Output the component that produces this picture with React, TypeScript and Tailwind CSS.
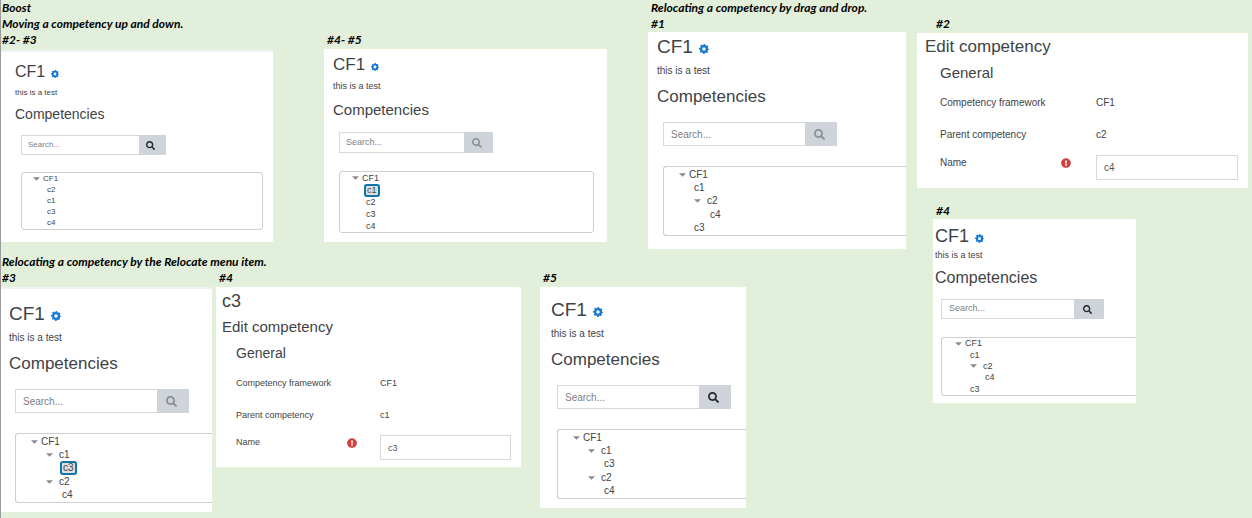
import clsx from "clsx";
import type { ReactNode } from "react";
import { FaExclamationCircle, FaSearch } from "react-icons/fa";

type Size = "sm" | "md" | "wide" | "lg";

interface TreeItem {
  name: string;
  depth: number;
  open?: boolean;
  selected?: boolean;
}

interface FrameworkPanelProps {
  id: string;
  size: Size;
  items: TreeItem[];
  className?: string;
  treeClassName?: string;
  searchDisabled?: boolean;
}

interface EditPanelProps {
  id: string;
  title?: string;
  parent: string;
  name: string;
  compact?: boolean;
  className?: string;
}

// Every panel shows the same page at a slightly different scale
const sizes = {
  sm: {
    title: "text-[16px] leading-5",
    cog: "size-2",
    note: "mt-1.5 text-[8px] leading-[10px]",
    heading: "mt-1.5 text-[14px] leading-5",
    search: "mt-[11px] h-5 w-[145px] text-[8px]",
    input: "px-1.5",
    button: "w-[27px]",
    searchIcon: "size-[9px]",
    tree: "mt-[17px] h-[58px] text-[8px]",
    indent: ["pl-[11px]", "pl-[25px]", "pl-[39px]"],
  },
  md: {
    title: "text-[17px] leading-5",
    cog: "size-2",
    note: "mt-1.5 text-[9px] leading-[10px]",
    heading: "mt-[9px] text-[15px] leading-5",
    search: "mt-3 h-[21px] w-[154px] text-[9px]",
    input: "px-1.5",
    button: "w-[29px]",
    searchIcon: "size-[10px]",
    tree: "mt-[18px] h-[62px] text-[9px]",
    indent: ["pl-3", "pl-[26px]", "pl-[42px]"],
  },
  wide: {
    title: "text-[18px] leading-5",
    cog: "size-[9px]",
    note: "mt-1 text-[9px] leading-[10px]",
    heading: "mt-2 text-[16px] leading-5",
    search: "mt-[11px] h-5 w-[163px] text-[9px]",
    input: "px-[7px]",
    button: "w-[30px]",
    searchIcon: "size-[9px]",
    tree: "mt-[18px] h-[59px] text-[9px]",
    indent: ["pl-[13px]", "pl-7", "pl-[43px]"],
  },
  lg: {
    title: "text-[19px] leading-6",
    cog: "size-[10px]",
    note: "mt-1.5 text-[10px] leading-3",
    heading: "mt-2 text-[17px] leading-6",
    search: "mt-[13px] h-6 w-[174px] text-[10px]",
    input: "px-[7px]",
    button: "w-8",
    searchIcon: "size-[11px]",
    tree: "mt-5 h-[70px] pt-px text-[10px]",
    indent: ["pl-[15px]", "pl-[30px]", "pl-[46px]"],
  },
};

function Label({ children, className }: { children: ReactNode; className?: string }) {
  return (
    <p
      className={clsx(
        "h-4 whitespace-nowrap font-['Lato','Open_Sans',sans-serif] text-[12px] font-bold italic leading-4 text-black",
        className ?? "pl-[3px]",
      )}
    >
      {children}
    </p>
  );
}

function Caret() {
  return (
    <svg viewBox="0 0 8 4" className="h-1 w-[7px] shrink-0 fill-[#8b8b8b]" aria-hidden="true">
      <path d="M0 0h8L4 4z" />
    </svg>
  );
}

// Ring with eight teeth
function Cog({ className }: { className?: string }) {
  return (
    <svg viewBox="0 0 16 16" className={className} fill="none" stroke="currentColor" aria-hidden="true">
      <circle cx="8" cy="8" r="4.6" strokeWidth="3.6" />
      <circle cx="8" cy="8" r="6.9" strokeWidth="2.2" pathLength="16" strokeDasharray="1 1" strokeDashoffset="0.5" />
    </svg>
  );
}

function FrameworkPanel({ id, size, items, className, treeClassName, searchDisabled }: FrameworkPanelProps) {
  const s = sizes[size];

  return (
    <article className={clsx("overflow-hidden bg-white text-[#404346]", className)}>
      <div className="flex items-center gap-1.5">
        <h2 className={s.title}>CF1</h2>
        <button type="button" aria-label="Edit framework" className="pt-1 text-[#1177d1]">
          <Cog className={s.cog} />
        </button>
      </div>
      <p className={s.note}>this is a test</p>
      <h3 className={s.heading}>Competencies</h3>

      {/* Search */}
      <form className={clsx("ml-1.5 flex", s.search)}>
        <input
          id={`${id}-search`}
          type="text"
          aria-label="Search competencies"
          placeholder="Search..."
          className={clsx(
            "min-w-0 flex-1 border border-r-0 border-[#d5d9de] bg-white outline-none placeholder:text-[#7b8187]",
            s.input,
          )}
        />
        <button
          type="button"
          aria-label="Search"
          disabled={searchDisabled}
          className={clsx(
            "flex items-center justify-center bg-[#ced4da] pr-1",
            s.button,
            searchDisabled ? "text-[#8c8f92]" : "text-[#25282b]",
          )}
        >
          <FaSearch className={s.searchIcon} />
        </button>
      </form>

      {/* Competency tree */}
      <ul
        role="tree"
        className={clsx(
          "ml-1.5 grid auto-rows-fr border border-[#cfcfcf]",
          s.tree,
          treeClassName ?? "rounded-l-[3px] border-r-0",
        )}
      >
        {items.map((item) => (
          <li
            key={item.name}
            role="treeitem"
            aria-selected={!!item.selected}
            className={clsx("flex min-h-0 items-center leading-none", s.indent[item.depth])}
          >
            {item.open && <Caret />}
            <span
              className={clsx(
                item.open && (item.depth === 0 ? "ml-[3px]" : "ml-1.5"),
                item.selected && "rounded-[1px] bg-[#dcdfe1] px-px ring-2 ring-[#1177aa]",
              )}
            >
              {item.name}
            </span>
          </li>
        ))}
      </ul>
    </article>
  );
}

function EditPanel({ id, title, parent, name, compact, className }: EditPanelProps) {
  const row = compact ? "grid grid-cols-[144px_1fr]" : "grid grid-cols-[156px_1fr]";

  return (
    <article className={clsx("bg-white pt-0.5 text-[#404346]", className)}>
      {title && <h2 className="mb-0.5 text-[18px] leading-6">{title}</h2>}
      <h3 className={clsx("leading-6", compact ? "text-[15px]" : "text-[17px]")}>Edit competency</h3>

      <form className={clsx("mt-1", compact ? "ml-[14px] mr-[10px] text-[9px]" : "ml-[15px] mr-[10px] text-[10px]")}>
        <h4 className={clsx("mb-1 leading-5", compact ? "text-[14px]" : "text-[15px]")}>General</h4>
        <div className={clsx(row, "leading-8")}>
          <span>Competency framework</span>
          <span>CF1</span>
        </div>
        <div className={clsx(row, "leading-8")}>
          <span>Parent competency</span>
          <span>{parent}</span>
        </div>
        <div className={clsx(row, "pt-1")}>
          <div className={clsx("flex h-[15px] items-center justify-between", compact ? "pr-[23px]" : "pr-[25px]")}>
            <label htmlFor={`${id}-name`}>Name</label>
            <FaExclamationCircle className="size-[10px] text-[#d43f3a]" title="Required" />
          </div>
          <input
            id={`${id}-name`}
            type="text"
            defaultValue={name}
            className="h-[25px] w-full min-w-0 border border-[#d5d9de] bg-white px-[7px] text-[#55595c] outline-none"
          />
        </div>
      </form>
    </article>
  );
}

export default function App() {
  return (
    <main className="grid min-h-screen grid-cols-[916fr_335fr] items-start border-l border-[#9b9b9b] bg-[#e2efda] font-['Liberation_Sans',Arial,sans-serif]">
      <div>
        <div className="grid grid-cols-[323fr_324fr_269fr] items-start">
          {/* Moving up and down */}
          <section>
            <Label className="pl-px">Boost</Label>
            <Label className="pl-px">Moving a competency up and down.</Label>
            <Label className="pl-px">#2- #3</Label>
            <FrameworkPanel
              id="boost-2"
              size="sm"
              className="mr-[51px] mt-0.5 border-t-2 border-[#f1f1f1] pb-3 pl-[14px] pr-[10px] pt-[10px]"
              treeClassName="rounded-[3px]"
              items={[
                { name: "CF1", depth: 0, open: true },
                { name: "c2", depth: 1 },
                { name: "c1", depth: 1 },
                { name: "c3", depth: 1 },
                { name: "c4", depth: 1 },
              ]}
            />
          </section>
          <section className="pt-8">
            <Label>#4- #5</Label>
            <FrameworkPanel
              id="boost-4"
              size="md"
              searchDisabled
              className="mr-[41px] mt-px pb-[9px] pl-[9px] pr-[13px] pt-1.5"
              treeClassName="rounded-[3px]"
              items={[
                { name: "CF1", depth: 0, open: true },
                { name: "c1", depth: 1, selected: true },
                { name: "c2", depth: 1 },
                { name: "c3", depth: 1 },
                { name: "c4", depth: 1 },
              ]}
            />
          </section>

          {/* Drag and drop, first step */}
          <section>
            <Label>Relocating a competency by drag and drop.</Label>
            <Label>#1</Label>
            <FrameworkPanel
              id="drag-1"
              size="lg"
              searchDisabled
              className="mr-[11px] pb-[13px] pl-[9px] pt-[3px]"
              items={[
                { name: "CF1", depth: 0, open: true },
                { name: "c1", depth: 1 },
                { name: "c2", depth: 1, open: true },
                { name: "c4", depth: 2 },
                { name: "c3", depth: 1 },
              ]}
            />
          </section>
        </div>

        {/* Relocate menu item */}
        <section className="mt-[5px]">
          <Label className="pl-px">Relocating a competency by the Relocate menu item.</Label>
          <div className="grid grid-cols-[215fr_324fr_377fr] items-start">
            <div>
              <Label className="pl-px">#3</Label>
              <FrameworkPanel
                id="relocate-3"
                size="lg"
                searchDisabled
                className="mr-1 mt-px border-t-2 border-[#f1f1f1] pb-[9px] pl-2 pt-[13px]"
                items={[
                  { name: "CF1", depth: 0, open: true },
                  { name: "c1", depth: 1, open: true },
                  { name: "c3", depth: 2, selected: true },
                  { name: "c2", depth: 1, open: true },
                  { name: "c4", depth: 2 },
                ]}
              />
            </div>
            <div>
              <Label>#4</Label>
              <EditPanel
                id="relocate-4"
                title="c3"
                parent="c1"
                name="c3"
                compact
                className="mr-[19px] mt-px pb-[7px] pl-[6px]"
              />
            </div>
            <div>
              <Label>#5</Label>
              <FrameworkPanel
                id="relocate-5"
                size="lg"
                className="mr-[171px] mt-px pb-[9px] pl-[11px] pt-[11px]"
                items={[
                  { name: "CF1", depth: 0, open: true },
                  { name: "c1", depth: 1, open: true },
                  { name: "c3", depth: 2 },
                  { name: "c2", depth: 1, open: true },
                  { name: "c4", depth: 2 },
                ]}
              />
            </div>
          </div>
        </section>
      </div>

      {/* Drag and drop, remaining steps */}
      <section className="pt-4">
        <Label className="pl-[19px]">#2</Label>
        <EditPanel id="drag-2" parent="c2" name="c4" className="mr-1 mt-px pb-2 pl-2" />
        <Label className="mt-[15px] pl-[19px]">#4</Label>
        <FrameworkPanel
          id="drag-4"
          size="wide"
          className="ml-4 mr-[116px] pb-[7px] pl-0.5 pt-[7px]"
          items={[
            { name: "CF1", depth: 0, open: true },
            { name: "c1", depth: 1 },
            { name: "c2", depth: 1, open: true },
            { name: "c4", depth: 2 },
            { name: "c3", depth: 1 },
          ]}
        />
      </section>
    </main>
  );
}
